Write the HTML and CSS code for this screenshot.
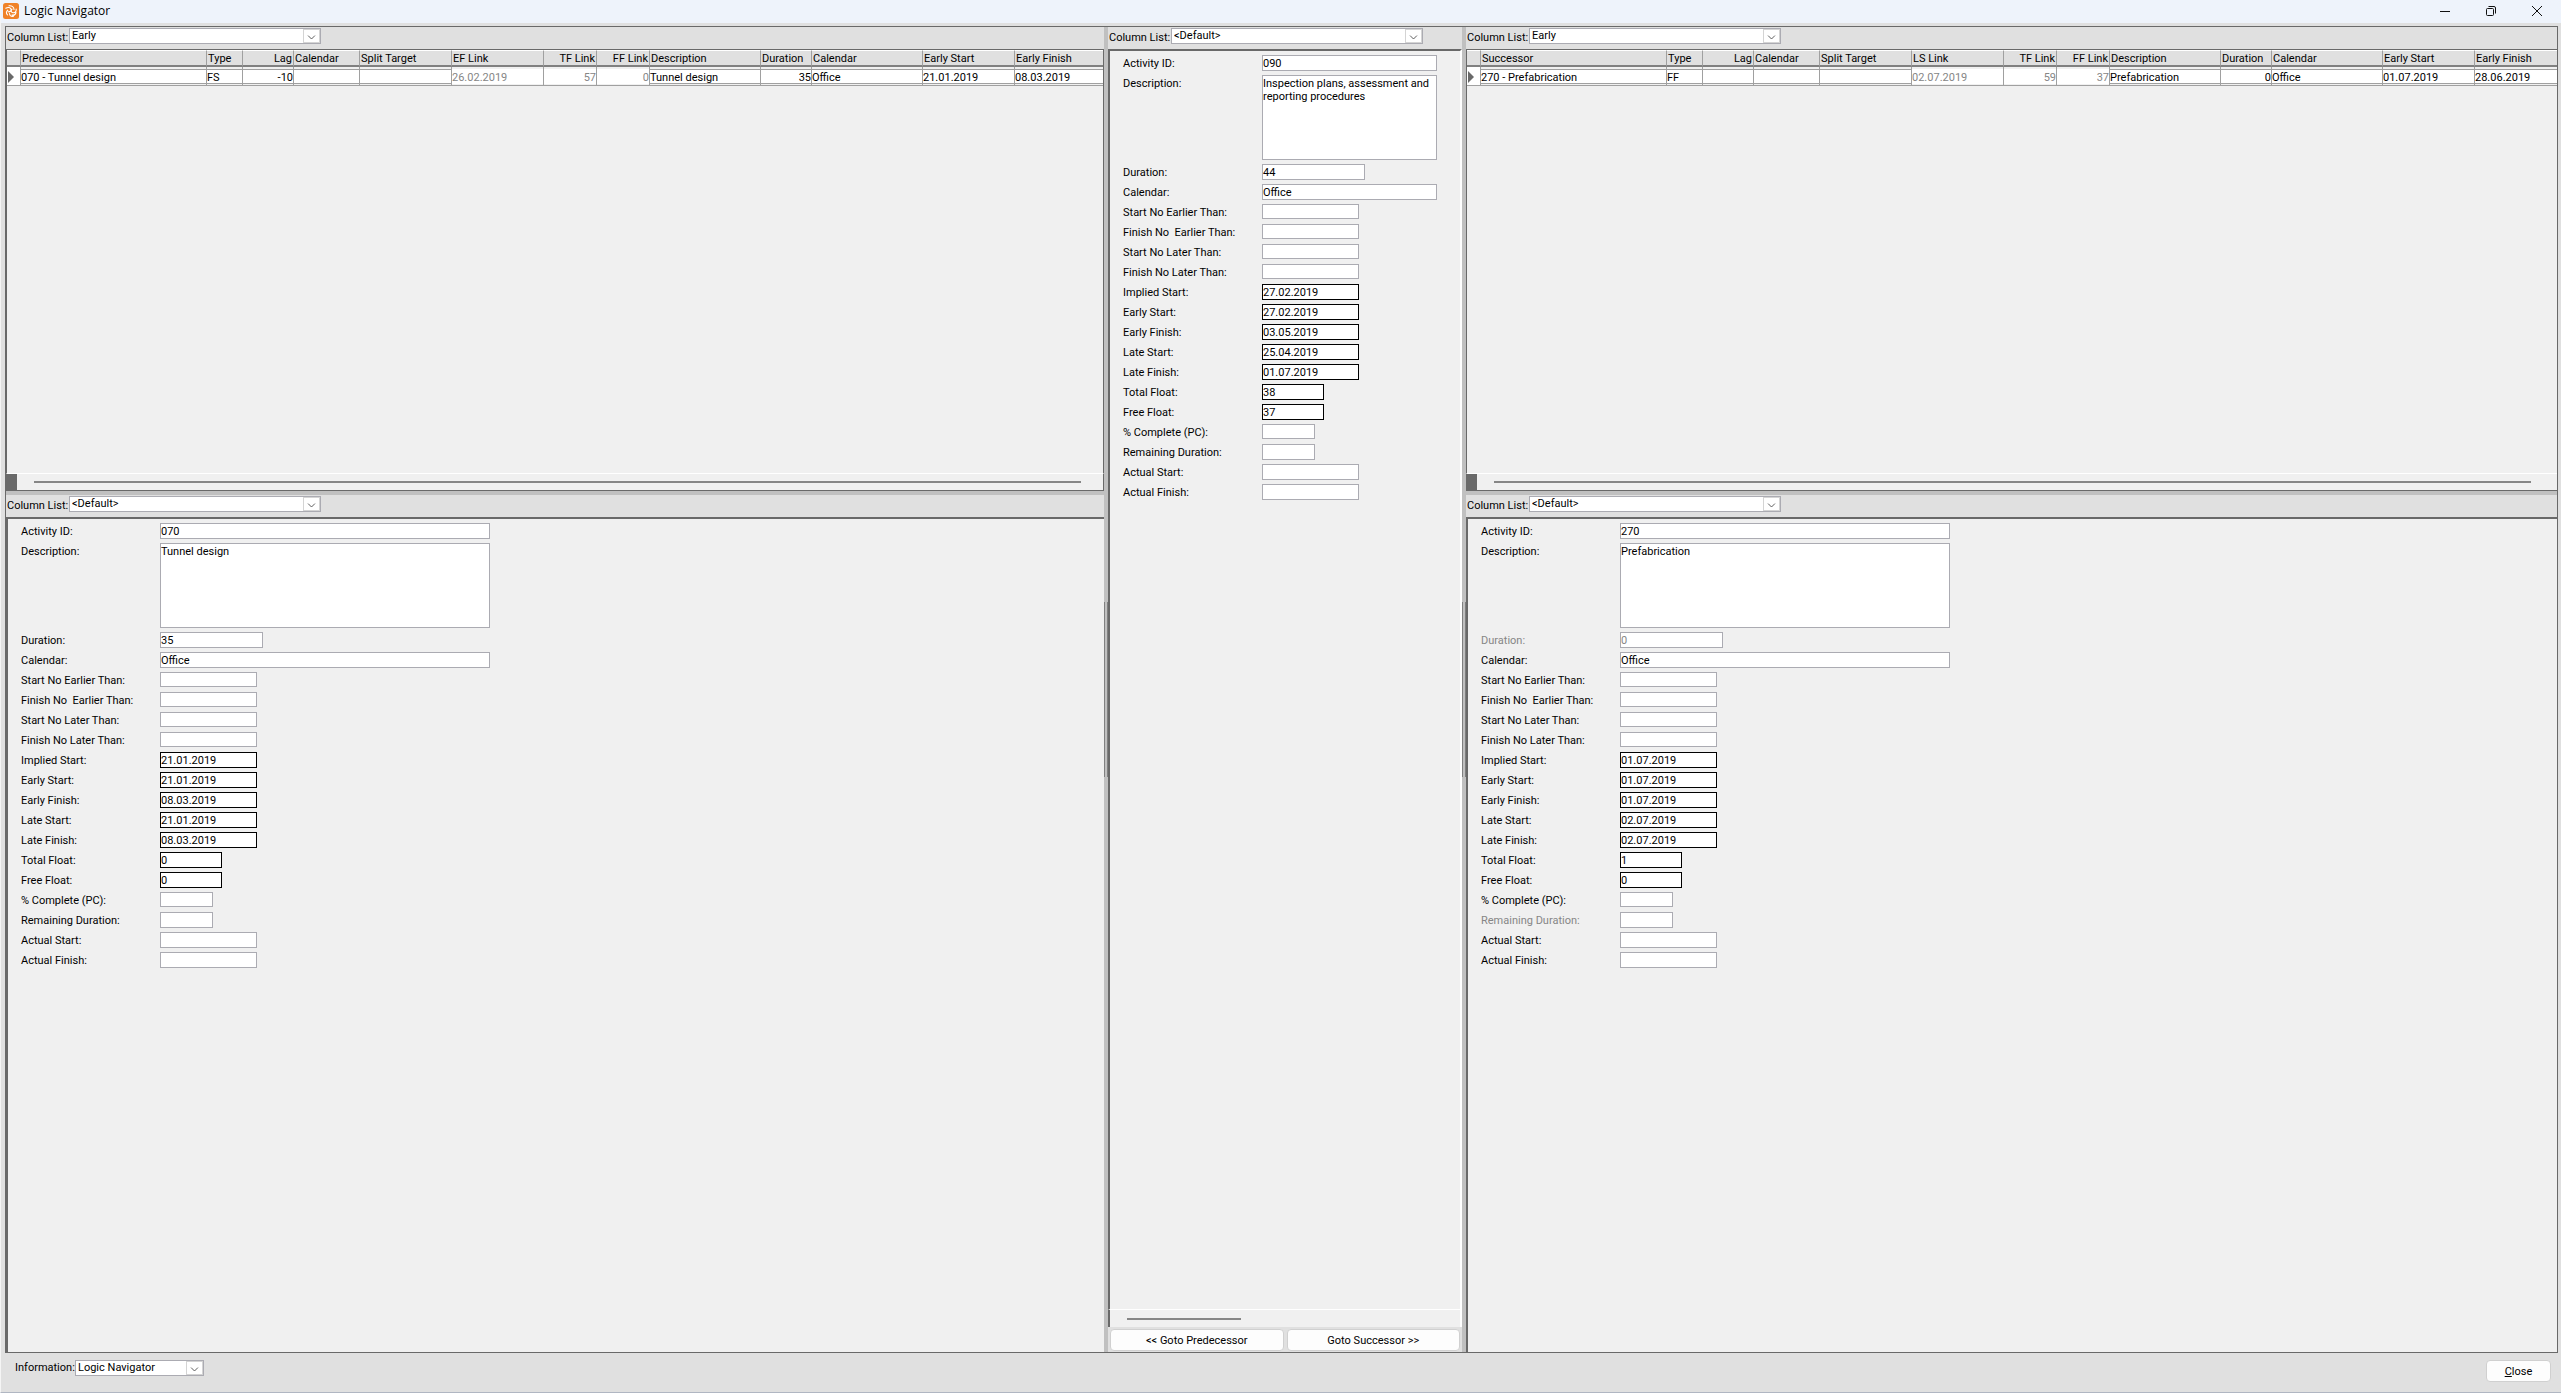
FILE: index.html
```html
<!DOCTYPE html>
<html lang="en">
<head>
<meta charset="utf-8">
<title>Logic Navigator</title>
<link rel="stylesheet" href="styles.css">
</head>
<body>
<header class="titlebar">
  <svg class="app-icon" viewBox="0 0 16 16" aria-hidden="true">
    <rect width="16" height="16" rx="2.500" fill="#f08228"/>
    <g fill="none" stroke="#fff" stroke-width="1.1" stroke-linecap="round" stroke-linejoin="round">
      <path d="M2.800 5.200C5 3.800 7.500 4.500 8 6.200S7 9 5.200 8.800M6 2.800C9 2.500 11 4 11 6.500M13.200 6C13.500 8.500 12 10 10 9.800S7.800 7.500 9 6.200M13 9.500C12.500 11.500 11 12.500 9 12M10.500 13.200C8 13.800 6.500 12.500 6.500 10.500M4.500 11.800C3 10.500 3 8.500 4.800 7.200"/>
    </g>
  </svg>
  <h1 class="title">Logic Navigator</h1>
  <div class="window-buttons">
    <button class="window-button" aria-label="Minimize"><svg viewBox="0 0 12 12"><path d="M1 6.500H11"/></svg></button>
    <button class="window-button" aria-label="Restore"><svg viewBox="0 0 12 12"><rect x="1.500" y="3.500" width="7" height="7" rx="1"/><path d="M3.500 1.500H9A1.500 1.500 0 0 1 10.500 3V8.500"/></svg></button>
    <button class="window-button" aria-label="Close window"><svg viewBox="0 0 12 12"><path d="M1 1 11 11M11 1 1 11"/></svg></button>
  </div>
</header>

<main class="workspace">
  <section class="side side-left">
    <div class="pane">
      <div class="toolbar">
        <label for="pl">Column List:</label>
        <span class="combo"><select id="pl"><option>Early</option></select><svg viewBox="0 0 17 14"><path d="M4.500 6.500 8.500 10.500 12.500 6.500"/></svg></span>
      </div>
      <div class="grid-area">
        <table class="links">
          <colgroup><col class="c-mark"><col class="c-name"><col class="c-type"><col class="c-lag"><col class="c-cal"><col class="c-date"><col class="c-date"><col class="c-float"><col class="c-float"><col class="c-text"><col class="c-lag"><col class="c-text"><col class="c-date"><col></colgroup>
          <thead><tr><th></th><th>Predecessor</th><th>Type</th><th class="num">Lag</th><th>Calendar</th><th>Split Target</th><th>EF Link</th><th class="num">TF Link</th><th class="num">FF Link</th><th>Description</th><th>Duration</th><th>Calendar</th><th>Early Start</th><th>Early Finish</th></tr></thead>
          <tbody><tr><td class="mark"><svg viewBox="0 0 6 12"><path d="M0 0 6 6 0 12Z"/></svg></td><td><span>070 - Tunnel design</span></td><td><span>FS</span></td><td class="num"><span>-10</span></td><td><span></span></td><td><span></span></td><td class="calc"><span>26.02.2019</span></td><td class="calc num"><span>57</span></td><td class="calc num"><span>0</span></td><td><span>Tunnel design</span></td><td class="num"><span>35</span></td><td><span>Office</span></td><td><span>21.01.2019</span></td><td><span>08.03.2019</span></td></tr></tbody>
        </table>
      </div>
      <div class="scrollbar"><span class="corner"></span><span class="thumb"></span></div>
    </div>
    <div class="splitter-row"></div>
    <div class="pane">
      <div class="toolbar">
        <label for="pd">Column List:</label>
        <span class="combo"><select id="pd"><option>&lt;Default&gt;</option></select><svg viewBox="0 0 17 14"><path d="M4.500 6.500 8.500 10.500 12.500 6.500"/></svg></span>
      </div>
      <form class="details">
        <div class="field"><label for="a1">Activity ID:</label><input id="a1" class="wide" value="070"></div>
        <div class="field memo"><label for="a2">Description:</label><textarea id="a2" class="wide">Tunnel design</textarea></div>
        <div class="field"><label for="a3">Duration:</label><input id="a3" class="medium" value="35"></div>
        <div class="field"><label for="a4">Calendar:</label><input id="a4" class="wide" value="Office"></div>
        <div class="field"><label for="a5">Start No Earlier Than:</label><input id="a5" class="date low"></div>
        <div class="field"><label for="a6">Finish No  Earlier Than:</label><input id="a6" class="date low"></div>
        <div class="field"><label for="a7">Start No Later Than:</label><input id="a7" class="date low"></div>
        <div class="field"><label for="a8">Finish No Later Than:</label><input id="a8" class="date low"></div>
        <div class="field"><label for="a9">Implied Start:</label><input id="a9" class="date fixed" value="21.01.2019" readonly></div>
        <div class="field"><label for="a10">Early Start:</label><input id="a10" class="date fixed" value="21.01.2019" readonly></div>
        <div class="field"><label for="a11">Early Finish:</label><input id="a11" class="date fixed" value="08.03.2019" readonly></div>
        <div class="field"><label for="a12">Late Start:</label><input id="a12" class="date fixed" value="21.01.2019" readonly></div>
        <div class="field"><label for="a13">Late Finish:</label><input id="a13" class="date fixed" value="08.03.2019" readonly></div>
        <div class="field"><label for="a14">Total Float:</label><input id="a14" class="short fixed" value="0" readonly></div>
        <div class="field"><label for="a15">Free Float:</label><input id="a15" class="short fixed" value="0" readonly></div>
        <div class="field"><label for="a16">% Complete (PC):</label><input id="a16" class="tiny low"></div>
        <div class="field"><label for="a17">Remaining Duration:</label><input id="a17" class="tiny"></div>
        <div class="field"><label for="a18">Actual Start:</label><input id="a18" class="date"></div>
        <div class="field"><label for="a19">Actual Finish:</label><input id="a19" class="date"></div>
      </form>
    </div>
  </section>

  <div class="splitter"></div>

  <section class="pane centre">
    <div class="toolbar">
      <label for="cd">Column List:</label>
      <span class="combo"><select id="cd"><option>&lt;Default&gt;</option></select><svg viewBox="0 0 17 14"><path d="M4.500 6.500 8.500 10.500 12.500 6.500"/></svg></span>
    </div>
    <form class="details">
      <div class="field"><label for="b1">Activity ID:</label><input id="b1" class="wide" value="090"></div>
      <div class="field memo"><label for="b2">Description:</label><textarea id="b2" class="wide">Inspection plans, assessment and reporting procedures</textarea></div>
      <div class="field"><label for="b3">Duration:</label><input id="b3" class="medium" value="44"></div>
      <div class="field"><label for="b4">Calendar:</label><input id="b4" class="wide" value="Office"></div>
      <div class="field"><label for="b5">Start No Earlier Than:</label><input id="b5" class="date low"></div>
      <div class="field"><label for="b6">Finish No  Earlier Than:</label><input id="b6" class="date low"></div>
      <div class="field"><label for="b7">Start No Later Than:</label><input id="b7" class="date low"></div>
      <div class="field"><label for="b8">Finish No Later Than:</label><input id="b8" class="date low"></div>
      <div class="field"><label for="b9">Implied Start:</label><input id="b9" class="date fixed" value="27.02.2019" readonly></div>
      <div class="field"><label for="b10">Early Start:</label><input id="b10" class="date fixed" value="27.02.2019" readonly></div>
      <div class="field"><label for="b11">Early Finish:</label><input id="b11" class="date fixed" value="03.05.2019" readonly></div>
      <div class="field"><label for="b12">Late Start:</label><input id="b12" class="date fixed" value="25.04.2019" readonly></div>
      <div class="field"><label for="b13">Late Finish:</label><input id="b13" class="date fixed" value="01.07.2019" readonly></div>
      <div class="field"><label for="b14">Total Float:</label><input id="b14" class="short fixed" value="38" readonly></div>
      <div class="field"><label for="b15">Free Float:</label><input id="b15" class="short fixed" value="37" readonly></div>
      <div class="field"><label for="b16">% Complete (PC):</label><input id="b16" class="tiny low"></div>
      <div class="field"><label for="b17">Remaining Duration:</label><input id="b17" class="tiny"></div>
      <div class="field"><label for="b18">Actual Start:</label><input id="b18" class="date"></div>
      <div class="field"><label for="b19">Actual Finish:</label><input id="b19" class="date"></div>
    </form>
    <div class="scrollbar"><span class="thumb"></span></div>
    <div class="goto">
      <button class="button">&lt;&lt; Goto Predecessor</button>
      <button class="button">Goto Successor &gt;&gt;</button>
    </div>
  </section>

  <div class="splitter"></div>

  <section class="side side-right">
    <div class="pane">
      <div class="toolbar">
        <label for="sl">Column List:</label>
        <span class="combo"><select id="sl"><option>Early</option></select><svg viewBox="0 0 17 14"><path d="M4.500 6.500 8.500 10.500 12.500 6.500"/></svg></span>
      </div>
      <div class="grid-area">
        <table class="links">
          <colgroup><col class="c-mark"><col class="c-name"><col class="c-type"><col class="c-lag"><col class="c-cal"><col class="c-date"><col class="c-date"><col class="c-float"><col class="c-float"><col class="c-text"><col class="c-lag"><col class="c-text"><col class="c-date"><col></colgroup>
          <thead><tr><th></th><th>Successor</th><th>Type</th><th class="num">Lag</th><th>Calendar</th><th>Split Target</th><th>LS Link</th><th class="num">TF Link</th><th class="num">FF Link</th><th>Description</th><th>Duration</th><th>Calendar</th><th>Early Start</th><th>Early Finish</th></tr></thead>
          <tbody><tr><td class="mark"><svg viewBox="0 0 6 12"><path d="M0 0 6 6 0 12Z"/></svg></td><td><span>270 - Prefabrication</span></td><td><span>FF</span></td><td class="num"><span></span></td><td><span></span></td><td><span></span></td><td class="calc"><span>02.07.2019</span></td><td class="calc num"><span>59</span></td><td class="calc num"><span>37</span></td><td><span>Prefabrication</span></td><td class="num"><span>0</span></td><td><span>Office</span></td><td><span>01.07.2019</span></td><td><span>28.06.2019</span></td></tr></tbody>
        </table>
      </div>
      <div class="scrollbar"><span class="corner"></span><span class="thumb"></span></div>
    </div>
    <div class="splitter-row"></div>
    <div class="pane">
      <div class="toolbar">
        <label for="sd">Column List:</label>
        <span class="combo"><select id="sd"><option>&lt;Default&gt;</option></select><svg viewBox="0 0 17 14"><path d="M4.500 6.500 8.500 10.500 12.500 6.500"/></svg></span>
      </div>
      <form class="details">
        <div class="field"><label for="s1">Activity ID:</label><input id="s1" class="wide" value="270"></div>
        <div class="field memo"><label for="s2">Description:</label><textarea id="s2" class="wide">Prefabrication</textarea></div>
        <div class="field off"><label for="s3">Duration:</label><input id="s3" class="medium" value="0" disabled></div>
        <div class="field"><label for="s4">Calendar:</label><input id="s4" class="wide" value="Office"></div>
        <div class="field"><label for="s5">Start No Earlier Than:</label><input id="s5" class="date low"></div>
        <div class="field"><label for="s6">Finish No  Earlier Than:</label><input id="s6" class="date low"></div>
        <div class="field"><label for="s7">Start No Later Than:</label><input id="s7" class="date low"></div>
        <div class="field"><label for="s8">Finish No Later Than:</label><input id="s8" class="date low"></div>
        <div class="field"><label for="s9">Implied Start:</label><input id="s9" class="date fixed" value="01.07.2019" readonly></div>
        <div class="field"><label for="s10">Early Start:</label><input id="s10" class="date fixed" value="01.07.2019" readonly></div>
        <div class="field"><label for="s11">Early Finish:</label><input id="s11" class="date fixed" value="01.07.2019" readonly></div>
        <div class="field"><label for="s12">Late Start:</label><input id="s12" class="date fixed" value="02.07.2019" readonly></div>
        <div class="field"><label for="s13">Late Finish:</label><input id="s13" class="date fixed" value="02.07.2019" readonly></div>
        <div class="field"><label for="s14">Total Float:</label><input id="s14" class="short fixed" value="1" readonly></div>
        <div class="field"><label for="s15">Free Float:</label><input id="s15" class="short fixed" value="0" readonly></div>
        <div class="field"><label for="s16">% Complete (PC):</label><input id="s16" class="tiny low"></div>
        <div class="field off"><label for="s17">Remaining Duration:</label><input id="s17" class="tiny" disabled></div>
        <div class="field"><label for="s18">Actual Start:</label><input id="s18" class="date"></div>
        <div class="field"><label for="s19">Actual Finish:</label><input id="s19" class="date"></div>
      </form>
    </div>
  </section>
</main>

<footer class="footer">
  <div class="info">
    <label for="info">Information:</label>
    <span class="combo combo-small"><select id="info"><option>Logic Navigator</option></select><svg viewBox="0 0 17 14"><path d="M4.500 6.500 8.500 10.500 12.500 6.500"/></svg></span>
  </div>
  <button class="button close"><u>C</u>lose</button>
</footer>
</body>
</html>
```

FILE: styles.css
```css
* { box-sizing: border-box; }

body {
  margin: 0;
  height: 100vh;
  display: flex;
  flex-direction: column;
  background: #e0e0e0;
  border-left: 1px solid #f5f5f5;
  border-bottom: 1px solid #b0b6c2;
  color: #000;
  font: 11px/16px Roboto, "Liberation Sans", sans-serif;
}

input, select, textarea, button {
  margin: 0;
  font: inherit;
  color: inherit;
  outline: 0;
}

label { white-space: pre; }

/* Title bar */
.titlebar {
  display: flex;
  align-items: center;
  height: 23px;
  padding: 0 1px 2px 2px;
  background: #eef3fb;
}
.app-icon { width: 16px; height: 16px; }
.title {
  flex: 1;
  margin: 0 0 0 5px;
  font: 12px/20px "Open Sans", "Noto Sans", sans-serif;
}
.window-buttons { display: flex; align-items: center; }
.window-button {
  width: 46px;
  height: 20px;
  padding: 0;
  border: 0;
  background: none;
}
.window-button svg {
  display: block;
  width: 12px;
  height: 12px;
  margin: 0 auto;
  fill: none;
  stroke: #111;
}

/* Three columns of panes with splitters between them */
.workspace {
  flex: 1;
  min-height: 0;
  margin: 3px 3px 0 4px;
  border: 1px solid #696969;
  display: grid;
  grid-template-columns: minmax(0, 1098fr) 4px 354px 4px minmax(0, 1091fr);
}
.side {
  display: grid;
  grid-template-rows: minmax(0, 464fr) 4px minmax(0, 857fr);
  min-height: 0;
}
.splitter {
  display: flex;
  align-items: center;
  justify-content: flex-end;
  background: #c0c0c0;
}
.splitter::before {
  content: "";
  width: 3px;
  height: 175px;
  border: solid #808080;
  border-width: 0 1px;
}
.splitter-row { background: #c0c0c0; }
.pane {
  display: flex;
  flex-direction: column;
  min-width: 0;
  min-height: 0;
  overflow: hidden;
}

/* Toolbar with the column list */
.toolbar {
  display: flex;
  align-items: flex-start;
  height: 22px;
  padding: 1px;
}
.toolbar label { width: 62px; line-height: 19px; }
.combo {
  position: relative;
  width: 252px;
  height: 16px;
  background: #fff;
  border: 1px solid #ababb2;
}
.combo select {
  display: block;
  width: 100%;
  height: 14px;
  padding: 0 18px 0 2px;
  border: 0;
  background: none;
  line-height: 14px;
  appearance: none;
}
.combo svg {
  position: absolute;
  top: 0;
  right: 0;
  width: 17px;
  height: 14px;
  border: 1px solid #d4d4d4;
  fill: none;
  stroke: #444;
  pointer-events: none;
}

/* Link tables */
.grid-area {
  flex: 1;
  min-height: 0;
  overflow: hidden;
  background: #f0f0f0;
  border: 1px solid #696969;
  border-bottom: 0;
}
.side-right .grid-area { border-right: 0; }
.links {
  width: 100%;
  table-layout: fixed;
  border-collapse: separate;
  border-spacing: 0;
}
.c-mark { width: 14px; }
.c-name { width: 186px; }
.c-type { width: 36px; }
.c-lag { width: 51px; }
.c-cal { width: 66px; }
.c-date { width: 92px; }
.c-float { width: 53px; }
.c-text { width: 111px; }
.links th {
  height: 17px;
  padding: 1px 1px 0;
  background: #e0e0e0;
  border-top: 1px solid #fff;
  border-right: 1px solid #a0a0a0;
  border-bottom: 2px solid #808080;
  font-weight: 400;
  line-height: 13px;
  text-align: left;
  white-space: nowrap;
}
.links td {
  height: 19px;
  padding: 2px 0 1px;
  border-right: 1px solid #a0a0a0;
  border-bottom: 1px solid #a0a0a0;
}
.links td span {
  display: block;
  height: 15px;
  background: #fff;
  border: solid #a0a0a0;
  border-width: 1px 0;
  line-height: 15px;
  white-space: nowrap;
}
.links td.calc { color: #868686; }
.links td.calc span { border-color: #fff; }
.links .num { text-align: right; }
.links td.mark { background: #fff; padding-left: 1px; }
.mark svg {
  display: block;
  width: 6px;
  height: 12px;
  fill: #696969;
}
.links tr > :last-child { border-right: 0; }

/* Horizontal scroll strips */
.scrollbar {
  display: flex;
  align-items: center;
  height: 18px;
  background: #f0f0f0;
  border-top: 1px solid #fff;
}
.side .scrollbar { border-bottom: 1px solid #696969; border-left: 1px solid #696969; }
.side-left .scrollbar { border-right: 1px solid #696969; }
.corner { width: 10px; height: 16px; background: #696969; }
.thumb { height: 2px; background: #868686; }
.side .thumb { flex: 1; margin: 0 22px 0 17px; }
.side-right .thumb { margin-right: 26px; }
.centre .thumb { width: 114px; margin-left: 17px; }
.centre .scrollbar { border-left: 2px solid #696969; border-right: 2px solid #fff; }

/* Activity details */
.details {
  flex: 1;
  min-height: 0;
  overflow: hidden;
  padding: 4px 0 0 13px;
  background: #f0f0f0;
  border: solid #696969;
  border-width: 2px 0 0 2px;
}
.centre .details { border-right: 2px solid #fff; }
.field {
  display: flex;
  align-items: flex-start;
  height: 20px;
}
.field label { width: 139px; line-height: 17px; }
.field input, .field textarea {
  height: 16px;
  padding: 0;
  background: #fff;
  border: 1px solid #ababb2;
  border-radius: 0;
  line-height: 14px;
}
.field.memo { height: 89px; }
.field textarea {
  height: 85px;
  padding-top: 1px;
  line-height: 13px;
  resize: none;
}
.field .wide { width: 330px; }
.centre .wide { width: 175px; }
.field .medium { width: 103px; }
.field .date { width: 97px; }
.field .short { width: 62px; }
.field .tiny { width: 53px; }
.field .low { height: 15px; }
.field .fixed { border-color: #000; }
.off, .off input { color: #868686; }

/* Buttons */
.button {
  padding: 1px 0 0;
  background: #fdfdfd;
  border: 1px solid #d0d0d0;
  border-radius: 4px;
  line-height: 19px;
}
.goto {
  display: grid;
  grid-template-columns: 1fr 1fr;
  grid-template-rows: 22px;
  gap: 3px;
  padding: 2px 2px 1px;
}

/* Bottom bar */
.footer {
  display: flex;
  justify-content: space-between;
  align-items: flex-start;
  height: 39px;
  padding: 7px 10px 0 14px;
}
.info { display: flex; }
.info label { width: 60px; }
.combo-small { width: 129px; }
.close { width: 65px; height: 22px; padding: 0; }
```
